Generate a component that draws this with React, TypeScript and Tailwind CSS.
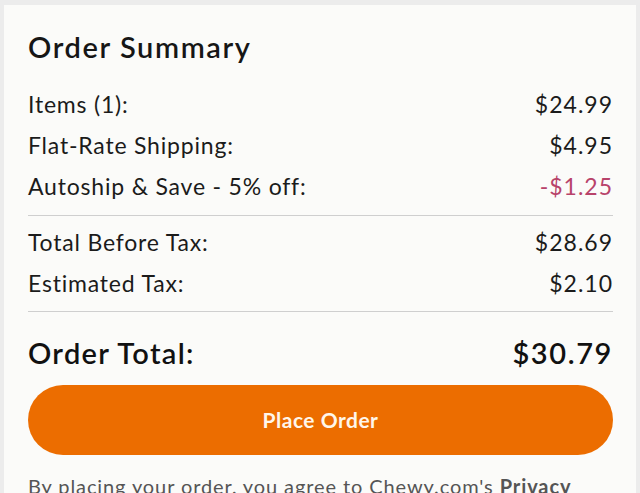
import React from "react";

const Row = ({ label, value, valueClass = "" }: { label: string; value: string; valueClass?: string }) => (
  <div className="h-[41px] flex items-center justify-between text-[23px] text-[#1b1b1b]">
    <span className="tracking-[0.8px]">{label}</span>
    <span className={"tracking-[1px] " + valueClass}>{value}</span>
  </div>
);

export default function App() {
  return (
    <div
      className="w-[640px] h-[493px] bg-[#ececec] pt-[5px] px-[4px] overflow-hidden"
      style={{ fontFamily: "Lato, 'Open Sans', sans-serif" }}
    >
      <div className="bg-[#fbfbf9] h-full pl-[24px] pr-[23px] pt-[22px]">
        <div className="h-[40px] flex items-center text-[29px] font-semibold tracking-[1.6px] text-[#161616]">Order Summary</div>
        <div className="mt-[17px]">
          <Row label="Items (1):" value="$24.99" />
          <Row label="Flat-Rate Shipping:" value="$4.95" />
          <Row label="Autoship & Save - 5% off:" value="-$1.25" valueClass="text-[#b8436a]" />
        </div>
        <div className="mt-[8px] border-t border-[#cfcfcf]" />
        <div className="mt-[6px]">
          <Row label="Total Before Tax:" value="$28.69" />
          <Row label="Estimated Tax:" value="$2.10" />
        </div>
        <div className="mt-[7px] border-t border-[#cfcfcf]" />
        <div className="mt-[16px] h-[50px] flex items-center justify-between text-[29px] font-semibold text-[#111]">
          <span className="tracking-[1.3px]">Order Total:</span>
          <span className="tracking-[1.6px]">$30.79</span>
        </div>
        <button className="mt-[7px] w-full h-[70px] rounded-full bg-[#ec6d00] text-[#fff6ea] text-[21px] font-bold tracking-[0.5px] flex items-center justify-center">
          Place Order
        </button>
        <p className="mt-[16px] text-[20px] tracking-[0.9px] text-[#555] whitespace-nowrap">
          By placing your order, you agree to Chewy.com's <span className="font-bold">Privacy</span>
        </p>
      </div>
    </div>
  );
}
